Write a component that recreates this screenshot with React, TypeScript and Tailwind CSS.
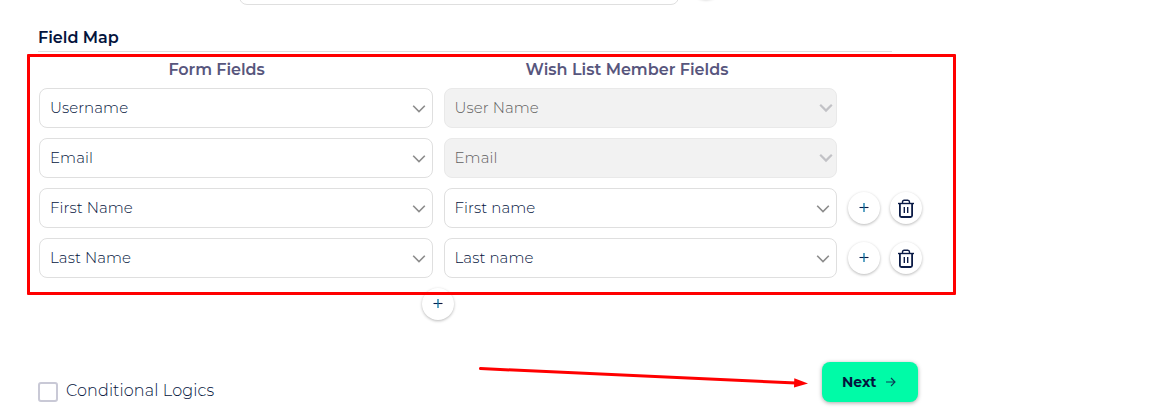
import React from "react";

function Select({ label, disabled, className }: { label: string; disabled?: boolean; className: string }) {
  return (
    <div
      className={`flex h-10 items-center justify-between rounded-lg border text-[15px] ${className} ${
        disabled ? "border-[#e9e9e9] bg-[#f2f2f2] pr-[3px] text-[#606060]" : "border-[#dfdfdf] bg-white pr-[6px] text-[#04143d]"
      }`}
    >
      <span className="tracking-[0.08px]">{label}</span>
      <svg width="14" height="10" viewBox="0 0 14 10" fill="none" className={disabled ? "-mt-px" : "mt-px"}>
        <path
          d="M1.2 1.8 L7 7.6 L12.8 1.8"
          stroke={disabled ? "#c2c2c6" : "#8c8c8c"}
          strokeWidth={disabled ? 2.2 : 1.6}
        />
      </svg>
    </div>
  );
}

function RoundButton({ children }: { children: React.ReactNode }) {
  return (
    <button className="flex size-8 shrink-0 items-center justify-center rounded-full bg-white shadow-[0_1px_3px_rgba(0,0,0,0.28)]">
      {children}
    </button>
  );
}

function Plus() {
  return (
    <svg width="10" height="10" viewBox="0 0 10 10" className="-mt-0.5">
      <path d="M0.5 5.5H9.5" stroke="#0b1b46" strokeWidth="1.1" />
      <path d="M5 1V10" stroke="#0874a6" strokeWidth="1.3" />
    </svg>
  );
}

function Trash() {
  return (
    <svg width="18" height="20" viewBox="0 0 18 20" fill="none" stroke="#0b1b46" className="mt-0.5">
      <path d="M1 4.5H17" strokeWidth="1.4" />
      <path d="M5.5 4.5V3Q5.5 1.2 7.2 1.2H10.8Q12.5 1.2 12.5 3V4.5" strokeWidth="1.4" />
      <path d="M2.9 4.5V16.5Q2.9 18 4.5 18H13.5Q15.1 18 15.1 16.5V4.5" strokeWidth="1.8" />
      <path d="M7.3 8V14M10.7 8V14" strokeWidth="1.4" />
    </svg>
  );
}

const rows = [
  { form: "Username", member: "User Name", fixed: true },
  { form: "Email", member: "Email", fixed: true },
  { form: "First Name", member: "First name", fixed: false },
  { form: "Last Name", member: "Last name", fixed: false },
];

export default function App() {
  return (
    <div className="relative h-[414px] w-[1151px] overflow-hidden bg-white font-['Montserrat','Inter',sans-serif] font-light text-[#04143d]">
      <div className="flex h-[5px] items-end pl-[239px]">
        <div className="h-10 w-[440px] shrink-0 rounded-lg border border-[#dfdfdf]" />
        <div className="mb-[6px] ml-[11px] size-8 shrink-0 rounded-full bg-white shadow-[0_1px_3px_rgba(0,0,0,0.24)]" />
      </div>

      <div className="ml-[38px] mt-[21px] h-[26px] w-[854px] border-b border-[#dfdfdf] text-base leading-[24px] font-semibold">
        Field Map
      </div>

      <div className="ml-[39px] mt-[7px] flex h-[22px] gap-[11px] text-center text-base leading-[22px] font-semibold text-[#57567d]">
        <div className="w-[394px] pr-[39px] tracking-[-0.05px]">Form Fields</div>
        <div className="w-[393px] pr-[27px]">Wish List Member Fields</div>
      </div>

      <div className="ml-[39px] mt-[7px] flex flex-col gap-[10px]">
        {rows.map((row) => (
          <div key={row.form} className="flex items-center">
            <Select label={row.form} className="w-[394px] pl-[10px]" />
            <Select label={row.member} disabled={row.fixed} className="ml-[11px] w-[393px] pl-[9.5px]" />
            {!row.fixed && (
              <div className="ml-[11px] flex gap-[10px]">
                <RoundButton><Plus /></RoundButton>
                <RoundButton><Trash /></RoundButton>
              </div>
            )}
          </div>
        ))}
      </div>

      <div className="ml-[422px] mt-[10px] flex">
        <RoundButton><Plus /></RoundButton>
      </div>

      <div className="mt-[42px] flex h-12 justify-between pl-[38px] pr-[233px]">
        <label className="mt-5 flex h-5 items-center gap-2 text-base">
          <span className="size-5 rounded-[3px] border-2 border-[#c9c9d6]" />
          <span className="relative -top-px tracking-[0.13px]">Conditional Logics</span>
        </label>
        <button className="flex h-10 w-24 items-center rounded-lg bg-[#00fba7] pl-5 text-sm font-bold shadow-[0_1px_4px_rgba(0,0,0,0.35)]">
          <span className="w-[44px] text-left">Next</span>
          <svg width="10" height="10" viewBox="0 0 10 10" fill="none" stroke="#0b3b55" strokeWidth="1.1">
            <path d="M0 5H9M5 1L9 5L5 9" />
          </svg>
        </button>
      </div>

      <div className="absolute left-[27px] top-[54px] h-[241px] w-[929px] rounded-[1px] border-3 border-[#ff0000]" />
      <svg className="absolute left-[478px] top-[364px]" width="334" height="28" viewBox="0 0 334 28">
        <path d="M2.5 4.6L318 19" stroke="#ff0000" strokeWidth="3" strokeLinecap="round" />
        <path d="M316.3 14.3L330 19.5L316 23.5Z" fill="#ff0000" />
      </svg>
    </div>
  );
}
